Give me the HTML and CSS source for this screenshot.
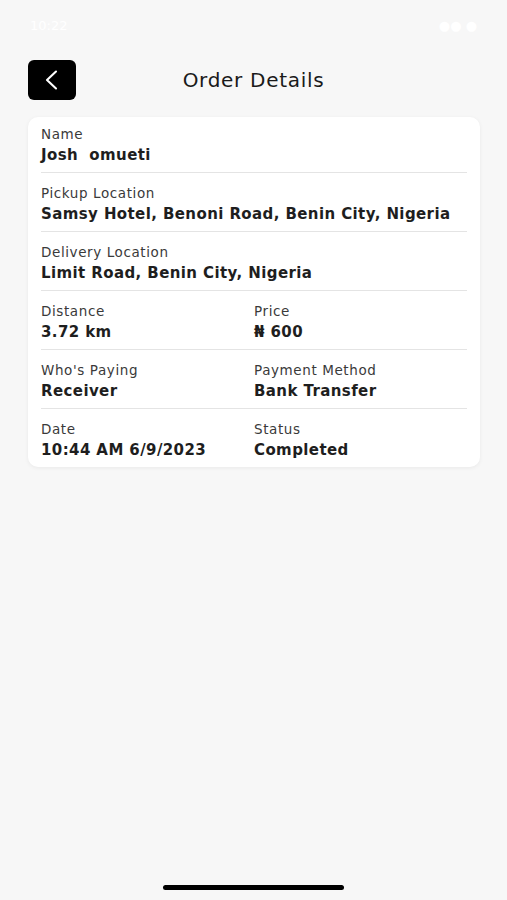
FILE: index.html
```html
<!DOCTYPE html>
<html lang="en">
<head>
  <meta charset="UTF-8" />
  <meta name="viewport" content="width=device-width, initial-scale=1.0" />
  <title>Order Details</title>
  <link rel="stylesheet" href="styles.css">
</head>
<body>
  <div class="status-bar">
    <span class="time">10:22</span>
    <span class="icons">&#9679;&#9679; &#9679;</span>
  </div>

  <header class="top-bar">
    <button class="back" aria-label="Back">
      <svg width="22" height="22" viewBox="0 0 22 22">
        <path d="M15 2.5 L6 11 L15 19.5" fill="none" stroke="#fff" stroke-width="2.1" stroke-linecap="round" stroke-linejoin="round"/>
      </svg>
    </button>
    <h1>Order Details</h1>
  </header>

  <div class="card">
    <div class="row">
      <div class="field">
        <div class="label">Name</div>
        <div class="value">Josh&nbsp; omueti</div>
      </div>
    </div>
    <div class="row">
      <div class="field">
        <div class="label">Pickup Location</div>
        <div class="value">Samsy Hotel, Benoni Road, Benin City, Nigeria</div>
      </div>
    </div>
    <div class="row">
      <div class="field">
        <div class="label">Delivery Location</div>
        <div class="value">Limit Road, Benin City, Nigeria</div>
      </div>
    </div>
    <div class="row split">
      <div class="field">
        <div class="label">Distance</div>
        <div class="value">3.72 km</div>
      </div>
      <div class="field">
        <div class="label">Price</div>
        <div class="value">&#8358; 600</div>
      </div>
    </div>
    <div class="row split">
      <div class="field">
        <div class="label">Who's Paying</div>
        <div class="value">Receiver</div>
      </div>
      <div class="field">
        <div class="label">Payment Method</div>
        <div class="value">Bank Transfer</div>
      </div>
    </div>
    <div class="row split">
      <div class="field">
        <div class="label">Date</div>
        <div class="value">10:44 AM 6/9/2023</div>
      </div>
      <div class="field">
        <div class="label">Status</div>
        <div class="value">Completed</div>
      </div>
    </div>
  </div>

  <div class="home-indicator"></div>
</body>
</html>
```

FILE: styles.css
```css
body {
  margin: 0;
  height: 900px;
  background: #f7f7f7;
  font-family: 'DejaVu Sans', 'Noto Sans', sans-serif;
  color: #222;
  display: flex;
  flex-direction: column;
}
.status-bar {
  height: 50px;
  display: flex;
  justify-content: space-between;
  align-items: center;
  padding: 0 30px;
  color: #fff;
  font-size: 13px;
}
.top-bar {
  position: relative;
  height: 40px;
  margin: 10px 28px 17px;
  display: flex;
  align-items: center;
  justify-content: center;
}
.back {
  position: absolute;
  left: 0;
  top: 0;
  width: 48px;
  height: 40px;
  border: none;
  border-radius: 6px;
  background: #000;
  display: flex;
  align-items: center;
  justify-content: center;
  padding: 0;
}
.top-bar h1 {
  margin: 0;
  font-size: 20px;
  font-weight: 500;
  letter-spacing: 0.7px;
  color: #1a1a1a;
}
.card {
  margin: 0 27px 0 28px;
  background: #fff;
  border-radius: 10px;
  padding: 0 13px;
  box-shadow: 0 1px 4px rgba(0,0,0,0.06);
}
.row {
  padding: 11px 0 7px;
  border-bottom: 1px solid #e4e4e4;
}
.row:first-child {
  padding-top: 8px;
}
.row:last-child {
  border-bottom: none;
  padding-bottom: 7px;
}
.split {
  display: grid;
  grid-template-columns: 1fr 1fr;
}
.label {
  font-size: 13.5px;
  line-height: 18px;
  letter-spacing: 0.6px;
  color: #3a3a3a;
}
.value {
  margin-top: 2px;
  font-size: 15px;
  line-height: 20px;
  font-weight: bold;
  letter-spacing: 0.4px;
  color: #1e1e1e;
  white-space: nowrap;
}
.home-indicator {
  margin: auto auto 10px;
  width: 181px;
  height: 5px;
  border-radius: 3px;
  background: #000;
}
```
